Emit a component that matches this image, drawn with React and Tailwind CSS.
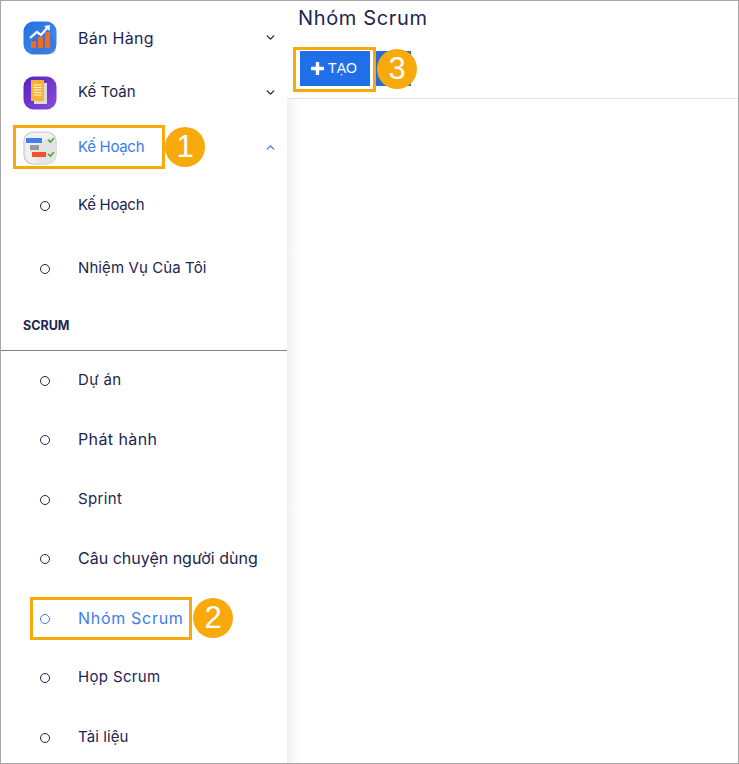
import { ChevronDown, ChevronUp } from "lucide-react";

// per-label size and spacing, the installed font runs narrower or wider than the original one on some words
const labelStyle = {
  "Bán Hàng": "text-[16px] tracking-[0.3px]",
  "Kế Toán": "text-[15px] tracking-[0.05px]",
  "Kế Hoạch": "text-[15px] tracking-[-0.3px]",
  "Nhiệm Vụ Của Tôi": "text-[15px] tracking-[0.1px]",
  "Phát hành": "text-[16px] tracking-[0.4px]",
  "Câu chuyện người dùng": "text-[16px] tracking-[0px]",
  "Nhóm Scrum": "text-[16px] tracking-[0.7px]",
  "Tài liệu": "text-[15px] tracking-[0.1px]",
};

function SalesIcon() {
  return (
    <svg width="34" height="34" viewBox="0 0 34 34">
      <defs>
        <linearGradient id="sales" x1="0" y1="0" x2="1" y2="1">
          <stop offset="0" stopColor="#1f6fe0" />
          <stop offset="1" stopColor="#4d8ff2" />
        </linearGradient>
      </defs>
      <rect width="33" height="33" x="0.5" y="0.5" rx="10" fill="url(#sales)" />
      <path d="M8 33 L8 20 L23 8 L33 20 L33 27 Q33 33 27 33 Z" fill="#2a62bd" opacity="0.35" />
      <path d="M7 17 L14 11 L18 14 L25 6" fill="none" stroke="#fff" strokeWidth="2.2" />
      <path d="M21 5 L27 4 L26.5 10 Z" fill="#fff" />
      <rect x="8" y="20" width="5" height="7" fill="#f26a22" />
      <rect x="15" y="16" width="5" height="11" fill="#f26a22" />
      <rect x="22" y="11" width="5" height="16" fill="#f26a22" />
    </svg>
  );
}

function AccountingIcon() {
  return (
    <svg width="34" height="34" viewBox="0 0 34 34">
      <defs>
        <linearGradient id="acc" x1="0" y1="0" x2="1" y2="1">
          <stop offset="0" stopColor="#5a1ec0" />
          <stop offset="1" stopColor="#8a4fd8" />
        </linearGradient>
      </defs>
      <rect width="33" height="33" x="0.5" y="0.5" rx="10" fill="url(#acc)" />
      <rect x="11" y="7" width="13" height="21" fill="#d9d9e4" />
      <rect x="8" y="4" width="13" height="21" fill="#f9b233" />
      <path d="M10.5 9 H18.5 M10.5 11.5 H18.5 M10.5 14 H18.5 M10.5 16.5 H18.5 M10.5 19 H18.5" stroke="#fff3d0" strokeWidth="1.1" />
    </svg>
  );
}

function PlanIcon() {
  return (
    <svg width="34" height="34" viewBox="0 0 34 34">
      <rect width="32" height="32" x="1" y="1" rx="9" fill="#f0f0f0" stroke="#c9c9c9" strokeWidth="1.2" />
      <path d="M18 33 L6 20 L26 6 L33 12 L33 24 Q33 33 24 33 Z" fill="#e4e4e4" />
      <rect x="3" y="7" width="16" height="5" fill="#3f80ee" />
      <rect x="7" y="14" width="9" height="5" fill="#9a9a9a" />
      <rect x="9" y="21" width="14" height="5" fill="#f4502a" />
      <path d="M25 9 L27.5 11 L31 7" fill="none" stroke="#5aa83c" strokeWidth="1.8" />
      <path d="M25 23 L27.5 25 L31 21" fill="none" stroke="#5aa83c" strokeWidth="1.8" />
    </svg>
  );
}

function TopItem({ icon, label, active }) {
  const Chevron = active ? ChevronUp : ChevronDown;
  return (
    <div className="h-[55px] flex items-center pl-[22px] pr-[10px]">
      <div className="w-[34px] h-[34px] shrink-0">{icon}</div>
      <span className={`ml-[21px] flex-1 ${labelStyle[label] || "text-[15px] tracking-[0.35px]"} ${active ? "text-[#3d7bf0]" : "text-[#1d2550]"}`}>
        {label}
      </span>
      <Chevron size={13} strokeWidth={2.5} className={active ? "text-[#3d7bf0]" : "text-[#1d2550]"} />
    </div>
  );
}

function SubItem({ label, active, height }) {
  return (
    <div className={`flex items-center pl-[39px] ${height}`}>
      <span className={`w-[10px] h-[10px] rounded-full border shrink-0 ${active ? "border-[#3d7bf0]" : "border-[#1d2550]"}`} />
      <span className={`ml-[28px] pb-[2px] whitespace-nowrap ${labelStyle[label] || "text-[15px] tracking-[0.35px]"} ${active ? "text-[#3d7bf0]" : "text-[#1d2550]"}`}>
        {label}
      </span>
    </div>
  );
}

function Marker({ className, children }) {
  return (
    <div className={`absolute w-10 h-10 rounded-full bg-[#f8aa0c] text-white flex items-center justify-center text-[31px] font-['Liberation_Sans',sans-serif] ${className}`}>
      {children}
    </div>
  );
}

export default function App() {
  const scrumItems = ["Dự án", "Phát hành", "Sprint", "Câu chuyện người dùng", "Nhóm Scrum", "Họp Scrum", "Tài liệu"];
  return (
    <div className="relative w-[739px] h-[764px] overflow-hidden flex bg-white border border-[#a6a6a6] font-['Inter',sans-serif]">
      <aside className="w-[286px] shrink-0 pt-[9px] bg-white">
        <TopItem icon={<SalesIcon />} label="Bán Hàng" />
        <TopItem icon={<AccountingIcon />} label="Kế Toán" />
        <TopItem icon={<PlanIcon />} label="Kế Hoạch" active />
        <SubItem label="Kế Hoạch" height="h-[60px] mt-px" />
        <SubItem label="Nhiệm Vụ Của Tôi" height="h-[60px] mt-[3px]" />
        <div className="h-[52px] flex items-center pl-[22px] pt-[3px] text-[12.5px] font-bold text-[#1d2550] border-b border-[#808080]">
          SCRUM
        </div>
        {scrumItems.map((item) => (
          <SubItem key={item} label={item} active={item === "Nhóm Scrum"} height="h-[59.5px]" />
        ))}
      </aside>
      <main className="flex-1 flex flex-col">
        <div className="flex-none border-b border-[#e2e2e2] h-[98px] pl-[11px] bg-white">
          <h1 className="text-[20px] leading-[34px] text-[#1d2550] tracking-[0.65px]">Nhóm Scrum</h1>
          <div className="flex mt-[16px] ml-[2px]">
            <button className="w-[70px] h-[35px] bg-[#1f6fe8] text-white text-[14px] flex items-center justify-center gap-[4px] pr-[2px] font-['Liberation_Sans',sans-serif]">
              <svg width="13" height="13" viewBox="0 0 13 13">
                <path d="M6.5 1 V12 M1 6.5 H12" stroke="#fff" strokeWidth="3.4" strokeLinecap="round" />
              </svg>
              TẠO
            </button>
            <div className="w-[35px] h-[35px] ml-[6px] bg-[#2a6bd6]" />
          </div>
        </div>
        <div className="flex-1 bg-white bg-gradient-to-r from-[#f1f1f1] to-white to-[12px]" />
      </main>

      <div className="absolute left-[12px] top-[124px] w-[152px] h-[44px] border-[3px] border-[#f8aa0c]" />
      <Marker className="left-[164px] top-[126px]">1</Marker>
      <div className="absolute left-[29px] top-[596px] w-[162px] h-[43px] border-[3px] border-[#f8aa0c]" />
      <Marker className="left-[192px] top-[597px]">2</Marker>
      <div className="absolute left-[292px] top-[46px] w-[83px] h-[45px] border-[3px] border-[#f8aa0c]" />
      <Marker className="left-[376px] top-[48px]">3</Marker>
    </div>
  );
}
